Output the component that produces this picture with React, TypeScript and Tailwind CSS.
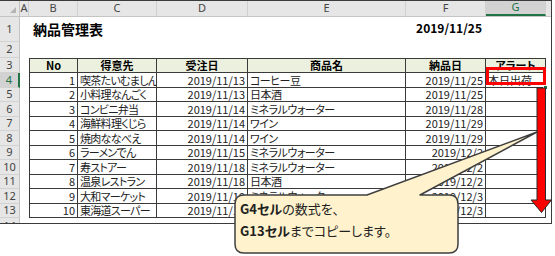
import React from 'react';

type Row = {
  no: number;
  client: string;
  order: string;
  item: string;
  delivery: string;
  alert?: string;
};

const rows: Row[] = [
  { no: 1, client: '喫茶たいむましん', order: '2019/11/13', item: 'コーヒー豆', delivery: '2019/11/25', alert: '本日出荷' },
  { no: 2, client: '小料理なんごく', order: '2019/11/13', item: '日本酒', delivery: '2019/11/25' },
  { no: 3, client: 'コンビニ弁当', order: '2019/11/14', item: 'ミネラルウォーター', delivery: '2019/11/28' },
  { no: 4, client: '海鮮料理くじら', order: '2019/11/14', item: 'ワイン', delivery: '2019/11/29' },
  { no: 5, client: '焼肉ななべえ', order: '2019/11/14', item: 'ワイン', delivery: '2019/11/29' },
  { no: 6, client: 'ラーメンでん', order: '2019/11/15', item: 'ミネラルウォーター', delivery: '2019/12/2' },
  { no: 7, client: '寿ストアー', order: '2019/11/18', item: 'ミネラルウォーター', delivery: '2019/12/2' },
  { no: 8, client: '温泉レストラン', order: '2019/11/18', item: '日本酒', delivery: '2019/12/2' },
  { no: 9, client: '大和マーケット', order: '2019/11/19', item: 'ミネラルウォーター', delivery: '2019/12/3' },
  { no: 10, client: '東海道スーパー', order: '2019/11/19', item: 'コーヒー豆', delivery: '2019/12/3' },
];

const letters = ['A', 'B', 'C', 'D', 'E', 'F', 'G'];
const widths = ['w-[9px]', 'w-[49px]', 'w-[79px]', 'w-[91px]', 'w-[158px]', 'w-[80px]', 'w-[60px]'];

const rowHead = 'w-[20px] shrink-0 flex items-center justify-center bg-[#e6e6e6] border-r border-b border-r-[#c4c4c4] border-b-[#d2d2d2] text-[11px] text-[#444] font-["Noto_Sans",sans-serif]';
const cell = 'shrink-0 flex items-center border-r border-b border-[#3a3a3a] px-[2px] whitespace-nowrap overflow-hidden';

function RowHeader({ n, active }: { n: number | string; active?: boolean }) {
  return (
    <div className={active ? rowHead + ' !bg-[#d2d2d2] !text-[#217346] !border-r-2 !border-r-[#217346]' : rowHead}>{n}</div>
  );
}

export default function App() {
  return (
    <div className="relative w-[555px] h-[256px] bg-white overflow-hidden font-['Noto_Sans_CJK_JP',sans-serif] text-[11px] text-[#222] [font-feature-settings:'palt']">
      {/* excel window */}
      <div className="w-[552px] h-[224px] flex flex-col border-t border-r border-b border-[#3b3b3b] overflow-hidden">
        {/* column headers */}
        <div className="h-[16px] flex shrink-0 bg-[#e6e6e6] border-b border-[#c4c4c4] text-[11px] text-[#444] font-['Noto_Sans',sans-serif]">
          <div className="w-[20px] shrink-0 relative border-r border-[#c4c4c4]">
            <div className="absolute right-[3px] bottom-[3px] w-0 h-0 border-l-[6px] border-l-transparent border-b-[6px] border-b-[#b5b5b5]" />
          </div>
          {letters.map((l, i) => (
            <div
              key={l}
              className={`${widths[i]} shrink-0 flex items-center justify-center border-r border-[#d0d0d0] ${l === 'G' ? 'bg-[#d2d2d2] text-[#217346] border-b-2 border-b-[#217346]' : ''}`}
            >
              {l}
            </div>
          ))}
          <div className="flex-1" />
        </div>

        {/* row 1 */}
        <div className="h-[25px] flex shrink-0">
          <RowHeader n={1} />
          <div className="w-[9px] shrink-0" />
          <div className="w-[49px] shrink-0 flex items-center pl-[4px] whitespace-nowrap overflow-visible text-[14px] font-bold text-black">納品管理表</div>
          <div className="w-[79px] shrink-0" />
          <div className="w-[91px] shrink-0" />
          <div className="w-[158px] shrink-0" />
          <div className="w-[80px] shrink-0 flex items-center justify-end pr-[4px] pb-[3px] font-bold text-[12px] text-black">2019/11/25</div>
        </div>

        {/* row 2 */}
        <div className="h-[16px] flex shrink-0">
          <RowHeader n={2} />
        </div>

        {/* row 3: table header */}
        <div className="h-[15px] flex shrink-0">
          <RowHeader n={3} />
          <div className="w-[9px] shrink-0" />
          {['No', '得意先', '受注日', '商品名', '納品日', 'アラート'].map((h, i) => (
            <div
              key={h}
              className={`${widths[i + 1]} ${cell} justify-center border-t bg-[#ebf1de] font-bold text-black ${i === 0 ? 'border-l' : ''}`}
            >
              {h}
            </div>
          ))}
        </div>

        {rows.map((r, idx) => (
          <div key={r.no} className="h-[14.5px] flex shrink-0">
            <RowHeader n={idx + 4} active={idx === 0} />
            <div className="w-[9px] shrink-0" />
            <div className={`w-[49px] ${cell} border-l justify-end`}>{r.no}</div>
            <div className={`w-[79px] ${cell} tracking-[-0.7px]`}>{r.client}</div>
            <div className={`w-[91px] ${cell} justify-end`}>{r.order}</div>
            <div className={`w-[158px] ${cell} tracking-[-0.5px]`}>{r.item}</div>
            <div className={`w-[80px] ${cell} justify-end`}>{r.delivery}</div>
            <div className={`w-[60px] ${cell} relative overflow-visible`}>
              {r.alert}
              {idx === 0 && <div className="absolute -right-[3px] -bottom-[3px] w-[5px] h-[5px] bg-[#217346] border border-white" />}
            </div>
          </div>
        ))}

        <div className="flex-1 flex">
          <RowHeader n={14} />
        </div>
      </div>

      {/* annotations */}
      <svg className="absolute inset-0" width="555" height="256" viewBox="0 0 555 256">
        <rect x="487.5" y="68.5" width="57" height="15" fill="none" stroke="#ff0000" strokeWidth="3" />
        <polygon
          points="537,88 545.5,88 545.5,200 551.5,200 541.5,212.5 531,200 537,200"
          fill="#ff0000"
          stroke="#2b2b2b"
          strokeWidth="1"
        />
        <path
          d="M244 195 L367 195 L537 132 L420 195 L449 195 Q458 195 458 204 L458 244 Q458 253 449 253 L244 253 Q235 253 235 244 L235 204 Q235 195 244 195 Z"
          fill="#fff2cc"
          stroke="#3f3f3f"
          strokeWidth="1.5"
          strokeLinejoin="round"
        />
      </svg>
      <div className="absolute left-[240px] top-[198px] text-[13px] leading-[22px] text-[#222]">
        <div>
          <span className="font-bold">G4セル</span>の数式を、
        </div>
        <div>
          <span className="font-bold">G13セル</span>までコピーします。
        </div>
      </div>
    </div>
  );
}
